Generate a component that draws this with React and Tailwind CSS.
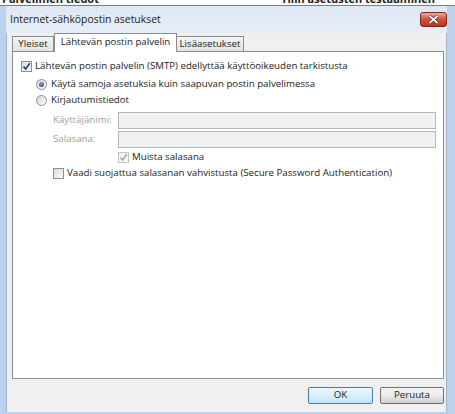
import { useState } from "react"

const font = { fontFamily: '"Open Sans", "Noto Sans", sans-serif' }

function Check({ checked, disabled, onChange }) {
    return (
        <span
            onClick={disabled ? undefined : onChange}
            className={
                "flex items-center justify-center w-[11px] h-[11px] border shrink-0 " +
                (disabled
                    ? "border-[#c2c4c6] bg-[#f4f4f4]"
                    : "border-[#8e8f8f] bg-gradient-to-br from-[#dcdcdc] to-[#fbfbfb]")
            }
        >
            {checked && (
                <svg width="9" height="9" viewBox="0 0 9 9">
                    <path
                        d="M1.5 4.5 L3.6 7 L7.8 1.2"
                        fill="none"
                        stroke={disabled ? "#a8a8a8" : "#1f3a7a"}
                        strokeWidth="1.6"
                    />
                </svg>
            )}
        </span>
    )
}

function Radio({ checked, onChange }) {
    return (
        <span
            onClick={onChange}
            className="flex items-center justify-center w-[11px] h-[11px] rounded-full border border-[#8e8f8f] bg-gradient-to-br from-[#d6d6d6] to-[#fcfcfc] shrink-0"
        >
            {checked && (
                <span className="w-[5px] h-[5px] rounded-full bg-[radial-gradient(circle_at_40%_35%,#7ea0d8,#1c3c83)]" />
            )}
        </span>
    )
}

function Field({ label }) {
    return (
        <div className="flex items-center h-[17px]">
            <span className="w-[65px] text-[#a0a0a0]">{label}</span>
            <div className="w-[318px] h-[17px] border border-[#b2b7bb] bg-[#f0f1f2]" />
        </div>
    )
}

export default function App() {
    const [auth, setAuth] = useState(true)
    const [mode, setMode] = useState("same")
    const [spa, setSpa] = useState(false)

    return (
        <div className="w-[455px] h-[414px] bg-white overflow-hidden text-[9.7px] text-[#1b1b1b]" style={font}>
            <div className="h-[5px] overflow-hidden flex justify-between px-[2px] text-[#222] text-[11px] font-bold leading-[10px]">
                <span className="-mt-[6px]">Palvelimen tiedot</span>
                <span className="-mt-[6px] mr-[18px]">Tilin asetusten testaaminen</span>
            </div>

            <div className="h-[409px] flex flex-col bg-[#bcd2ec] border-t border-[#6f8196] pl-[6px] pr-[8px] pb-[2px]">
                <div className="h-[27px] flex items-center justify-between pl-[4px] pr-[0px] bg-gradient-to-b from-[#dfe8f3] to-[#e6edf6]">
                    <span className="text-[10.4px] text-[#1e1e1e]">Internet-sähköpostin asetukset</span>
                    <span className="flex items-center justify-center w-[27px] h-[15px] rounded-[3px] border border-[#7a2a1e] bg-gradient-to-b from-[#e9ab9a] via-[#d05038] to-[#c0301d]">
                        <svg width="11" height="9" viewBox="0 0 11 9">
                            <path d="M1.5 1 L9.5 8 M9.5 1 L1.5 8" stroke="#5a1a10" strokeWidth="3.2" />
                            <path d="M1.5 1 L9.5 8 M9.5 1 L1.5 8" stroke="#ffffff" strokeWidth="1.8" />
                        </svg>
                    </span>
                </div>

                <div className="flex-1 flex flex-col bg-[#f0f0f0] border-l border-r border-[#a6b5c6] pl-[5px] pr-[2px]">
                    <div className="h-[18px] flex items-end">
                        <div className="h-[15px] w-[42px] flex items-center justify-center border border-b-0 border-[#898c95] bg-gradient-to-b from-[#f4f4f4] to-[#e3e3e3]">
                            Yleiset
                        </div>
                        <div className="relative z-10 -mb-px h-[19px] w-[123px] flex items-start pt-[1px] justify-center border border-b-0 border-[#898c95] bg-white">
                            Lähtevän postin palvelin
                        </div>
                        <div className="h-[15px] w-[67px] flex items-center justify-center border border-b-0 border-l-0 border-[#898c95] bg-gradient-to-b from-[#f4f4f4] to-[#e3e3e3]">
                            Lisäasetukset
                        </div>
                    </div>

                    <div className="h-[328px] border border-[#898c95] bg-white flex flex-col pl-[8px]">
                        <label className="mt-[6px] h-[16px] flex items-center gap-[3px]">
                            <Check checked={auth} onChange={() => setAuth(!auth)} />
                            <span>Lähtevän postin palvelin (SMTP) edellyttää käyttöoikeuden tarkistusta</span>
                        </label>
                        <label className="mt-[3px] h-[15px] flex items-center gap-[4px] pl-[15px]">
                            <Radio checked={mode === "same"} onChange={() => setMode("same")} />
                            <span>Käytä samoja asetuksia kuin saapuvan postin palvelimessa</span>
                        </label>
                        <label className="h-[16px] flex items-center gap-[4px] pl-[15px]">
                            <Radio checked={mode === "login"} onChange={() => setMode("login")} />
                            <span>Kirjautumistiedot</span>
                        </label>
                        <div className="mt-[4px] pl-[32px] flex flex-col gap-[2px]">
                            <Field label="Käyttäjänimi:" />
                            <Field label="Salasana:" />
                        </div>
                        <div className="mt-[1px] h-[16px] flex items-center gap-[3px] pl-[97px] text-[#1b1b1b]">
                            <Check checked disabled />
                            <span>Muista salasana</span>
                        </div>
                        <label className="h-[16px] flex items-center gap-[3px] pl-[32px]">
                            <Check checked={spa} onChange={() => setSpa(!spa)} />
                            <span>Vaadi suojattua salasanan vahvistusta (Secure Password Authentication)</span>
                        </label>
                    </div>

                    <div className="flex-1 flex items-center justify-end gap-[7px]">
                        <button className="w-[65px] h-[17px] rounded-[2px] border border-[#3c7fb1] bg-gradient-to-b from-[#eaf6fd] via-[#d9f0fc] to-[#bee6fd] text-[9.7px]">
                            OK
                        </button>
                        <button className="w-[64px] h-[17px] rounded-[2px] border border-[#707070] bg-gradient-to-b from-[#f2f2f2] via-[#ebebeb] to-[#cfcfcf] text-[9.7px]">
                            Peruuta
                        </button>
                    </div>
                </div>
            </div>
        </div>
    )
}
